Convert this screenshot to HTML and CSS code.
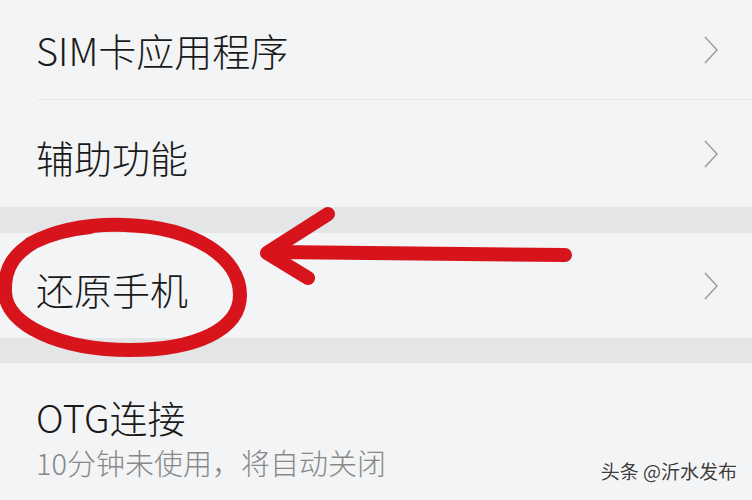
FILE: index.html
```html
<!DOCTYPE html>
<html lang="zh-CN">
<head>
    <meta charset="UTF-8">
    <meta name="viewport" content="width=device-width, initial-scale=1.0">
    <title>设置</title>
    <link rel="stylesheet" href="styles.css">
</head>
<body>
    <div class="screen">
        <div class="group">
            <div class="item first">
                <span class="title">SIM卡应用程序</span>
                <svg class="chevron" viewBox="0 0 14 28"><path d="M1 1 L13 14 L1 27"/></svg>
            </div>
            <div class="item second">
                <span class="title">辅助功能</span>
                <svg class="chevron" viewBox="0 0 14 28"><path d="M1 1 L13 14 L1 27"/></svg>
            </div>
        </div>

        <div class="gap"></div>

        <div class="group">
            <div class="item reset">
                <span class="title">还原手机</span>
                <svg class="chevron" viewBox="0 0 14 28"><path d="M1 1 L13 14 L1 27"/></svg>
            </div>
        </div>

        <div class="gap short"></div>

        <div class="group">
            <div class="item otg">
                <div class="text">
                    <span class="title">OTG连接</span>
                    <span class="sub">10分钟未使用，将自动关闭</span>
                </div>
            </div>
        </div>

        <!-- red hand-drawn markup over the list -->
        <svg class="markup" viewBox="0 0 752 500">
            <path d="M30 244 C60 228 95 224 125 225 C195 227 240 258 240 295 C240 330 195 350 130 350 C60 350 6 325 5 292 C4 268 14 254 34 242 C50 234 70 229 90 227"/>
            <path d="M565 255 L274 252"/>
            <path d="M328 214 L267 253 L308 278"/>
        </svg>

        <div class="watermark">头条 @沂水发布</div>
    </div>
</body>
</html>
```

FILE: styles.css
```css
body { margin: 0; font-family: "Noto Sans CJK SC", "Noto Sans", sans-serif; }
.screen { position: relative; width: 752px; height: 500px; overflow: hidden; background: #f3f4f5; }
.group { background: #f3f4f5; }
.item { display: flex; align-items: center; justify-content: space-between; padding: 0 34px 0 36px; box-sizing: border-box; }
.item.first { height: 100px; margin-left: 38px; padding-left: 0; border-bottom: 1px solid #e3e4e6; }
.item.first .title { margin-left: -2px; padding-top: 0; }
.item.second { height: 107px; }
.item.reset { height: 105px; }
.item.otg { height: 137px; align-items: flex-start; padding-top: 29px; }
.title { font-size: 38px; font-weight: 300; line-height: 50px; color: #1a1a1a; padding-top: 6px; }
.text { display: flex; flex-direction: column; }
.text .title { padding-top: 0; }
.sub { font-size: 29px; font-weight: 300; line-height: 40px; color: #888; }
.chevron { width: 14px; height: 28px; fill: none; stroke: #9a9a9a; stroke-width: 1.4; }
.gap { height: 26px; background: #e3e5e7; }
.gap.short { height: 25px; }
.markup { position: absolute; left: 0; top: 0; width: 752px; height: 500px; fill: none; stroke: #d7141b; stroke-width: 14; stroke-linecap: round; stroke-linejoin: round; }
.watermark { position: absolute; right: 15px; bottom: 16px; font-size: 19px; color: #3c3c3c; text-shadow: 0 0 2px #fff, 0 0 2px #fff; }
```
